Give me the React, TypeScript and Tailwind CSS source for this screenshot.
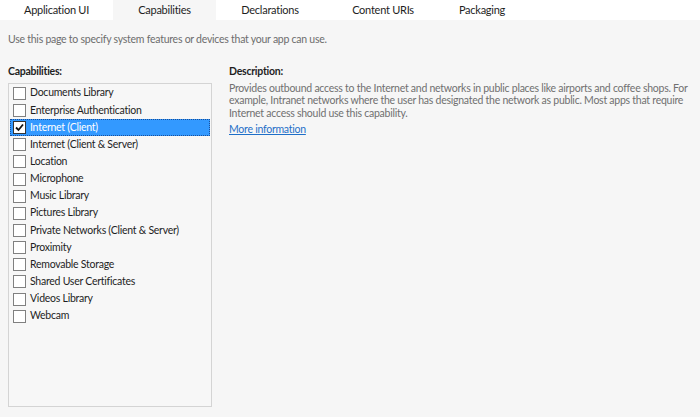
import React from 'react';

const tabs = ['Application UI', 'Capabilities', 'Declarations', 'Content URIs', 'Packaging'];
const tabWidths = ['w-[113px]', 'w-[103px]', 'w-[108px]', 'w-[118px]', 'w-[80px]'];

const capabilities = [
  'Documents Library',
  'Enterprise Authentication',
  'Internet (Client)',
  'Internet (Client & Server)',
  'Location',
  'Microphone',
  'Music Library',
  'Pictures Library',
  'Private Networks (Client & Server)',
  'Proximity',
  'Removable Storage',
  'Shared User Certificates',
  'Videos Library',
  'Webcam',
];

const App: React.FC = () => {
  return (
    <div
      className="w-[700px] h-[417px] bg-[#f6f6f6] text-[10.5px] tracking-[-0.25px] overflow-hidden"
      style={{ fontFamily: 'Lato, "Open Sans", sans-serif' }}
    >
      {/* Tabs */}
      <div className="flex h-[20px] bg-white">
        {tabs.map((t, i) => (
          <div
            key={t}
            className={`flex items-center justify-center text-[#1e1e1e] text-[11px] ${
              i === 1 ? 'bg-[#f6f6f6]' : 'bg-white'
            } ${tabWidths[i]}`}
          >
            {t}
          </div>
        ))}
      </div>

      <p className="px-2 mt-[12px] text-[#6d6d6d]">
        Use this page to specify system features or devices that your app can use.
      </p>

      <div className="flex mt-[16px] px-2 gap-[17px]">
        {/* Capabilities list */}
        <div className="w-[204px] shrink-0">
          <div className="font-bold text-[#1e1e1e] leading-[14px]">Capabilities:</div>
          <div className="mt-[5px] h-[324px] border border-[#d4d4d4] bg-[#f7f7f7] pt-[1px] px-[1px]">
            {capabilities.map((c) => {
              const sel = c === 'Internet (Client)';
              return (
                <div
                  key={c}
                  className={`flex items-center h-[17.15px] px-[3px] ${
                    sel
                      ? 'bg-[#3399ff] text-white outline outline-1 outline-dotted outline-[#1a4f99] -outline-offset-1'
                      : 'text-[#1e1e1e]'
                  }`}
                >
                  <div
                    className={`w-[13px] h-[13px] border flex items-center justify-center shrink-0 bg-white ${
                      sel ? 'border-[#333]' : 'border-[#808080]'
                    }`}
                  >
                    {sel && (
                      <svg viewBox="0 0 11 11" className="w-[11px] h-[11px]">
                        <path d="M2 5.5 L4.5 8 L9 2.5" fill="none" stroke="#111" strokeWidth="1.8" />
                      </svg>
                    )}
                  </div>
                  <span className="ml-[4px] whitespace-nowrap">{c}</span>
                </div>
              );
            })}
          </div>
        </div>

        {/* Description */}
        <div className="flex-1 pr-2">
          <div className="font-bold text-[#1e1e1e] leading-[14px]">Description:</div>
          <p className="mt-[4px] text-[#707070] leading-[12.5px] whitespace-nowrap">
            Provides outbound access to the Internet and networks in public places like airports and coffee shops. For
            <br />
            example, Intranet networks where the user has designated the network as public. Most apps that require
            <br />
            Internet access should use this capability.
          </p>
          <a className="block mt-[3px] text-[#1e6fc8] underline" href="#">
            More information
          </a>
        </div>
      </div>
    </div>
  );
};

export default App;
